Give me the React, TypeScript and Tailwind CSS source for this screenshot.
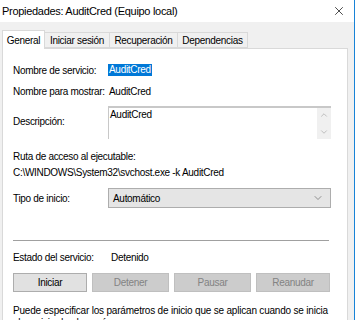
import { ChevronDown, ChevronUp, X } from "lucide-react";

const font = { fontFamily: '"Liberation Sans", Arial, sans-serif' };

function Tab({ label, active, width }: { label: string; active?: boolean; width: string }) {
  return (
    <div
      className={
        active
          ? `relative z-10 -mb-px flex h-[19px] items-center justify-center border border-b-0 border-[#d9d9d9] bg-white ${width}`
          : `-ml-px flex h-[16px] items-center justify-center border border-[#d9d9d9] bg-[#f0f0f0] ${width}`
      }
    >
      {label}
    </div>
  );
}

function Btn({ label, disabled, width }: { label: string; disabled?: boolean; width: string }) {
  return (
    <div
      className={
        disabled
          ? `flex h-[19px] items-center justify-center border border-[#bfbfbf] bg-[#cccccc] text-[#838383] ${width}`
          : `flex h-[19px] items-center justify-center border border-[#adadad] bg-[#e1e1e1] text-black ${width}`
      }
    >
      {label}
    </div>
  );
}

export default function App() {
  return (
    <div
      className="flex h-[320px] w-[359px] overflow-hidden bg-white text-[10px] tracking-[-0.3px] text-black"
      style={font}
    >
      <div className="flex w-[354px] flex-col bg-[#f0f0f0]">
        <div className="flex h-[22px] shrink-0 items-center justify-between bg-white pl-[2px] pr-[8px] text-[11px]">
          <span>Propiedades: AuditCred (Equipo local)</span>
          <X size={14} strokeWidth={1.2} />
        </div>

        <div className="mt-[8px] flex items-end pl-[2px]">
          <Tab label="General" active width="w-[43px]" />
          <Tab label="Iniciar sesión" width="w-[66px]" />
          <Tab label="Recuperación" width="w-[69px]" />
          <Tab label="Dependencias" width="w-[71px]" />
        </div>

        <div className="ml-[2px] w-[346px] flex-1 border border-[#d9d9d9] bg-white pl-[10px] pr-[4px]">
          <div className="mt-[15px] flex h-[12px] items-center">
            <span className="w-[95px]">Nombre de servicio:</span>
            <span className="bg-[#0078d7] px-[1px] leading-[12px] text-white">AuditCred</span>
          </div>
          <div className="mt-[9px] flex h-[12px] items-center whitespace-nowrap">
            <span className="w-[96px]">Nombre para mostrar:</span>
            <span>AuditCred</span>
          </div>

          <div className="mt-[9px] flex">
            <span className="mt-[8px] w-[95px]">Descripción:</span>
            <div className="flex h-[33px] w-[223px] border-l border-t-2 border-[#c8c8c8]">
              <div className="flex-1 pl-[1px] pt-[1px] leading-[12px]">AuditCred</div>
              <div className="flex w-[14px] flex-col items-center justify-between bg-[#f0f0f0] py-[2px] text-[#a0a0a0]">
                <ChevronUp size={10} strokeWidth={1.5} />
                <ChevronDown size={10} strokeWidth={1.5} />
              </div>
            </div>
          </div>

          <div className="mt-[10px] leading-[16px]">
            <div>Ruta de acceso al ejecutable:</div>
            <div>C:\WINDOWS\System32\svchost.exe -k AuditCred</div>
          </div>

          <div className="mt-[7px] flex items-center">
            <span className="w-[95px]">Tipo de inicio:</span>
            <div className="flex h-[20px] w-[223px] items-center justify-between border border-[#adadad] bg-[#e5e5e5] pl-[4px] pr-[6px]">
              <span>Automático</span>
              <ChevronDown size={12} strokeWidth={1.2} className="text-[#555]" />
            </div>
          </div>

          <div className="mt-[32px] h-px w-[316px] bg-[#a0a0a0]" />

          <div className="mt-[10px] flex h-[12px] items-center">
            <span className="w-[98px]">Estado del servicio:</span>
            <span>Detenido</span>
          </div>

          <div className="mt-[10px] flex gap-[5px]">
            <Btn label="Iniciar" width="w-[74px]" />
            <Btn label="Detener" disabled width="w-[77px]" />
            <Btn label="Pausar" disabled width="w-[77px]" />
            <Btn label="Reanudar" disabled width="w-[74px]" />
          </div>

          <div className="mt-[13px] w-[316px] leading-[12px] tracking-[-0.2px]">
            Puede especificar los parámetros de inicio que se aplican cuando se inicia el servicio desde aquí.
          </div>
        </div>
      </div>
      <div className="w-px bg-[#1883d7]" />
      <div className="flex-1 bg-white" />
    </div>
  );
}
